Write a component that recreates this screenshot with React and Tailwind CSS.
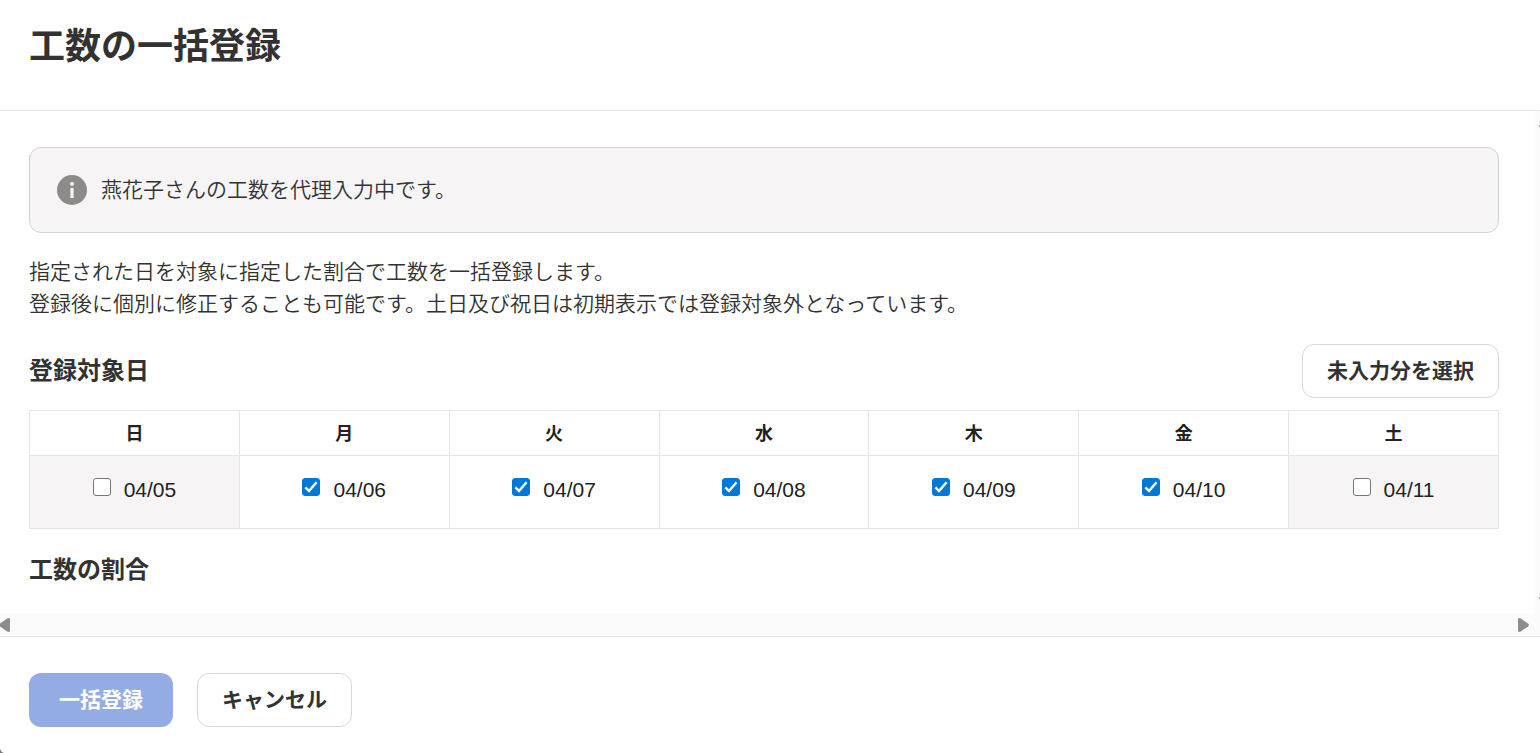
import { useState } from "react";

const initialDays = [
  { week: "日", date: "04/05", holiday: true, checked: false },
  { week: "月", date: "04/06", holiday: false, checked: true },
  { week: "火", date: "04/07", holiday: false, checked: true },
  { week: "水", date: "04/08", holiday: false, checked: true },
  { week: "木", date: "04/09", holiday: false, checked: true },
  { week: "金", date: "04/10", holiday: false, checked: true },
  { week: "土", date: "04/11", holiday: true, checked: false },
];

const InfoIcon = () => (
  <svg viewBox="0 0 30 30" className="h-[30px] w-[30px] shrink-0" aria-hidden="true">
    <circle cx="15" cy="15" r="15" fill="#8c8b89" />
    <rect x="13.2" y="7.3" width="3.6" height="3.4" rx="0.6" fill="#f6f4f5" />
    <rect x="13.4" y="13" width="3.2" height="10" fill="#f6f4f5" />
  </svg>
);

const DayCheckbox = ({ id, checked, onChange }) => (
  <span className="grid h-[18px] w-[18px] shrink-0">
    <input
      id={id}
      type="checkbox"
      checked={checked}
      onChange={onChange}
      className="col-start-1 row-start-1 h-[18px] w-[18px] appearance-none rounded-[3px] border border-[#767676] bg-white checked:border-[#0078d7] checked:bg-[#0078d7]"
    />
    {checked && (
      <svg
        viewBox="0 0 18 18"
        className="pointer-events-none col-start-1 row-start-1 h-[18px] w-[18px]"
        fill="none"
        stroke="#fff"
        strokeWidth="2.4"
        aria-hidden="true"
      >
        <path d="M3.4 9.4 7 13 14.6 4.2" />
      </svg>
    )}
  </span>
);

const outlineButton =
  "h-[54px] rounded-xl border border-[#d9d8d9] bg-white px-6 text-[21px] leading-8 font-bold text-[#323232]";

const App = () => {
  const [days, setDays] = useState(initialDays);

  const toggleDay = (date) => {
    setDays(
      days.map((day) =>
        day.date === date ? { ...day, checked: !day.checked } : day
      )
    );
  };

  const selectMissing = () => {
    setDays(days.map((day) => ({ ...day, checked: !day.holiday })));
  };

  return (
    <div className="relative flex min-h-screen flex-col overflow-hidden bg-white font-['Liberation_Sans','Noto_Sans_CJK_JP',sans-serif] text-[21px] leading-8 text-[#323232]">
      <header className="border-b border-[#e5e5e5] px-[29px] pt-[21px] pb-[37px]">
        <h1 className="text-4xl leading-[52px] font-bold">工数の一括登録</h1>
      </header>

      <div className="flex">
        <main className="min-w-0 flex-1 pt-9 pr-9 pb-[27px] pl-[29px]">
          <div className="flex items-center gap-[14px] rounded-xl border border-[#d2d0d2] bg-[#f6f4f5] px-[27px] py-[26px]">
            <InfoIcon />
            <p className="font-[350]">燕花子さんの工数を代理入力中です。</p>
          </div>

          <p className="mt-[23px] font-[350]">
            指定された日を対象に指定した割合で工数を一括登録します。
            <br />
            登録後に個別に修正することも可能です。土日及び祝日は初期表示では登録対象外となっています。
          </p>

          <div className="mt-6 flex items-center justify-between">
            <h2 className="text-2xl leading-8 font-bold">登録対象日</h2>
            <button type="button" onClick={selectMissing} className={outlineButton}>
              未入力分を選択
            </button>
          </div>

          <table className="mt-3 w-full table-fixed border-collapse text-[#222]">
            <thead>
              <tr className="h-[45px]">
                {days.map((day) => (
                  <th
                    key={day.date}
                    scope="col"
                    className="border border-[#e5e5e5] pt-0.5 text-lg leading-6 font-bold"
                  >
                    {day.week}
                  </th>
                ))}
              </tr>
            </thead>
            <tbody>
              <tr className="h-[73px]">
                {days.map((day) => (
                  <td
                    key={day.date}
                    className={`border border-[#e5e5e5] pt-[15px] align-top ${
                      day.holiday ? "bg-[#f6f4f5]" : "bg-white"
                    }`}
                  >
                    <div className="flex items-start justify-center gap-[13px]">
                      <span className="pt-[7px]">
                        <DayCheckbox
                          id={day.date}
                          checked={day.checked}
                          onChange={() => toggleDay(day.date)}
                        />
                      </span>
                      <label htmlFor={day.date} className="pt-[3px]">
                        {day.date}
                      </label>
                    </div>
                  </td>
                ))}
              </tr>
            </tbody>
          </table>

          <h2 className="mt-[25px] text-2xl leading-8 font-bold">工数の割合</h2>
        </main>

        {/* vertical scroll track */}
        <div className="flex w-[5px] flex-col items-end justify-between bg-[#fbfbfb] py-[14px]">
          <span className="h-[2px] w-px bg-[#aaa]" />
          <span className="h-[2px] w-px bg-[#aaa]" />
        </div>
      </div>

      {/* horizontal scroll track */}
      <div className="flex h-6 items-center justify-between border-b border-[#e5e5e5] bg-[#fbfbfb] pr-[11px]">
        <svg viewBox="0 0 10 14" className="h-[14px] w-[10px]" fill="#8b8b8b" aria-hidden="true">
          <path d="M0 5.4 7.2.5Q10-.8 10 1.5v11Q10 14.8 7.2 13.5L0 8.6Z" />
        </svg>
        <svg viewBox="0 0 11 14" className="h-[14px] w-[11px]" fill="#8b8b8b" aria-hidden="true">
          <path d="M0 1.5Q0-.8 2.8.5L10.3 5.8Q11.6 7 10.3 8.2L2.8 13.5Q0 14.8 0 12.5Z" />
        </svg>
      </div>

      <footer className="flex gap-6 px-[29px] pt-9 pb-[26px]">
        <button
          type="button"
          disabled
          className="h-[54px] rounded-xl bg-[#94ace4] px-[30px] text-[21px] leading-8 font-bold text-white"
        >
          一括登録
        </button>
        <button type="button" className={outlineButton}>
          キャンセル
        </button>
      </footer>

      <svg viewBox="0 0 4 4" className="absolute bottom-0 left-0 h-1 w-1" fill="#77777a" aria-hidden="true">
        <path d="M0 0Q.8 3 4 4H0Z" />
      </svg>
    </div>
  );
};

export default App;
